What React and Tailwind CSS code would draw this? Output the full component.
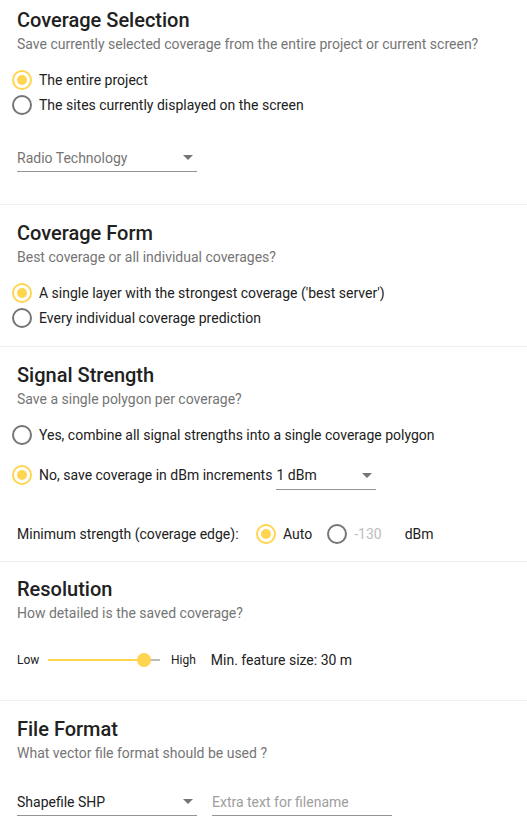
import { useState } from 'react';

const Radio = ({ checked, label, muted }) => (
  <label className="flex items-center gap-[7px] cursor-pointer">
    <span
      className={`w-[20px] h-[20px] rounded-full border-2 flex items-center justify-center shrink-0 ${
        checked ? 'border-[#ffd54f]' : 'border-[#757575]'
      }`}
    >
      {checked && <span className="w-[10px] h-[10px] rounded-full bg-[#ffd54f]" />}
    </span>
    {label && (
      <span className={`text-[14px] leading-[20px] ${muted ? 'text-[#bdbdbd]' : 'text-[#212121]'}`}>{label}</span>
    )}
  </label>
);

const Arrow = () => (
  <svg width="10" height="5" viewBox="0 0 10 5" className="shrink-0">
    <path d="M0 0l5 5 5-5z" fill="#757575" />
  </svg>
);

const Select = ({ value, placeholder, className }) => (
  <div className={`h-[28px] flex items-center justify-between border-b border-[#949494] pr-[4px] ${className}`}>
    <span className={`text-[14px] leading-[20px] ${placeholder ? 'text-[#757575]' : 'text-[#212121]'}`}>{value}</span>
    <Arrow />
  </div>
);

const Section = ({ title, subtitle, className, children }) => (
  <section className={`px-[17px] border-b border-[#f0f0f0] ${className}`}>
    <h2 className="text-[20px] leading-[24px] font-medium text-[#212121]">{title}</h2>
    <p className="mt-[2px] text-[14px] leading-[20px] text-[#757575]">{subtitle}</p>
    {children}
  </section>
);

const App = () => {
  const [resolution] = useState(86);

  return (
    <div className="w-[527px] min-h-[829px] bg-white font-['Roboto',sans-serif] antialiased">
      <Section
        title="Coverage Selection"
        subtitle="Save currently selected coverage from the entire project or current screen?"
        className="pt-[8px] pb-[32px]"
      >
        <div className="mt-[14px] -ml-[5px] flex flex-col gap-[1px]">
          <div className="h-[24px] flex items-center"><Radio checked label="The entire project" /></div>
          <div className="h-[24px] flex items-center"><Radio label="The sites currently displayed on the screen" /></div>
        </div>
        <Select value="Radio Technology" placeholder className="mt-[27px] w-[180px]" />
      </Section>

      <Section
        title="Coverage Form"
        subtitle="Best coverage or all individual coverages?"
        className="pt-[16px] pb-[16px]"
      >
        <div className="mt-[14px] -ml-[5px] flex flex-col gap-[1px]">
          <div className="h-[24px] flex items-center">
            <Radio checked label="A single layer with the strongest coverage ('best server')" />
          </div>
          <div className="h-[24px] flex items-center"><Radio label="Every individual coverage prediction" /></div>
        </div>
      </Section>

      <Section
        title="Signal Strength"
        subtitle="Save a single polygon per coverage?"
        className="pt-[16px] pb-[15px]"
      >
        <div className="mt-[14px] -ml-[5px] flex flex-col gap-[14px]">
          <div className="h-[24px] flex items-center">
            <Radio label="Yes, combine all signal strengths into a single coverage polygon" />
          </div>
          <div className="h-[28px] flex items-center gap-[4px]">
            <Radio checked label="No, save coverage in dBm increments" />
            <Select value="1 dBm" className="w-[100px] mt-[1px]" />
          </div>
        </div>
        <div className="mt-[33px] h-[24px] flex items-center text-[14px] text-[#212121]">
          <span className="w-[239px]">Minimum strength (coverage edge):</span>
          <Radio checked label="Auto" />
          <span className="ml-[15px]">
            <Radio label="-130" muted />
          </span>
          <span className="ml-[23px]">dBm</span>
        </div>
      </Section>

      <Section
        title="Resolution"
        subtitle="How detailed is the saved coverage?"
        className="pt-[15px] pb-[28px]"
      >
        <div className="mt-[25px] h-[24px] flex items-center text-[#212121]">
          <span className="text-[12px] w-[31px]">Low</span>
          <div className="relative w-[112px] h-[14px] flex items-center">
            <div className="w-full h-[2px] bg-[#bdbdbd]" />
            <div className="absolute left-0 h-[2px] bg-[#ffd54f]" style={{ width: `${resolution}%` }} />
            <div
              className="absolute w-[14px] h-[14px] rounded-full bg-[#ffd54f] -translate-x-1/2"
              style={{ left: `${resolution}%` }}
            />
          </div>
          <span className="text-[12px] ml-[11px]">High</span>
          <span className="text-[14px] ml-[15px]">Min. feature size: 30 m</span>
        </div>
      </Section>

      <section className="px-[17px] pt-[16px] pb-[12px]">
        <h2 className="text-[20px] leading-[24px] font-medium text-[#212121]">File Format</h2>
        <p className="mt-[2px] text-[14px] leading-[20px] text-[#757575]">What vector file format should be used ?</p>
        <div className="mt-[25px] flex items-center gap-[15px]">
          <Select value="Shapefile SHP" className="w-[180px]" />
          <div className="w-[180px] h-[28px] flex items-center border-b border-[#949494]">
            <span className="text-[14px] leading-[20px] text-[#9e9e9e]">Extra text for filename</span>
          </div>
        </div>
      </section>
    </div>
  );
};

export default App;
